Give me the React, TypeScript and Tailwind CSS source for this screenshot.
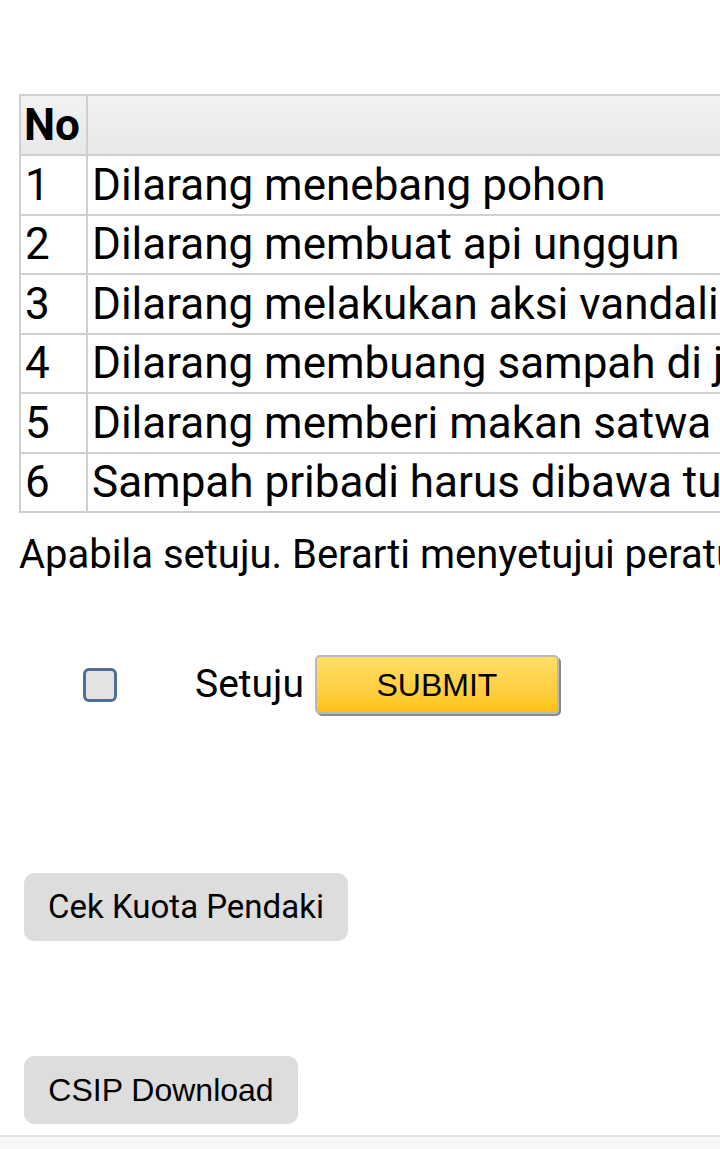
import React from "react";

const rows = [
  ["1", "Dilarang menebang pohon"],
  ["2", "Dilarang membuat api unggun"],
  ["3", "Dilarang melakukan aksi vandalisme"],
  ["4", "Dilarang membuang sampah di jalur pendakian"],
  ["5", "Dilarang memberi makan satwa liar"],
  ["6", "Sampah pribadi harus dibawa turun kembali"],
];

export default function App() {
  return (
    <div className="w-[720px] h-[1149px] overflow-hidden bg-white text-black" style={{ fontFamily: "Roboto, 'Noto Sans', sans-serif" }}>
      <div className="pt-[94px] pl-[19px]">
        <table className="border-collapse w-[1300px] text-[44px] leading-[56px]">
          <thead>
            <tr className="bg-gradient-to-b from-[#f2f2f2] to-[#e8e8e8]">
              <th className="border-2 border-[#cfcfcf] w-[67px] h-[60px] text-left pl-[3px] font-bold">No</th>
              <th className="border-2 border-[#cfcfcf]"></th>
            </tr>
          </thead>
          <tbody>
            {rows.map(([n, t]) => (
              <tr key={n}>
                <td className="border-2 border-[#cfcfcf] pl-[4px] h-[59.5px] whitespace-nowrap">{n}</td>
                <td className="border-2 border-[#cfcfcf] pl-[4px] whitespace-nowrap">{t}</td>
              </tr>
            ))}
          </tbody>
        </table>
        <p className="mt-[18px] text-[40px] leading-[48px] whitespace-nowrap">Apabila setuju. Berarti menyetujui peraturan yang berlaku</p>
      </div>
      <div className="mt-[76px] flex items-center">
        <div className="ml-[83px] w-[34px] h-[34px] rounded-[6px] border-[3px] border-[#4f6f94] bg-[#e3e3e3]" />
        <span className="ml-[78px] text-[39px]">Setuju</span>
        <button className="ml-[11px] w-[244px] h-[59px] rounded-[5px] bg-gradient-to-b from-[#ffe066] to-[#ffc20e] border-2 border-[#b8b8b8] shadow-[2px_2px_0_#8a8a8a] text-[32px] text-black" style={{ fontFamily: "'Liberation Sans', Arial, sans-serif" }}>SUBMIT</button>
      </div>
      <div className="mt-[159px] pl-[24px]">
        <button className="w-[324px] h-[68px] rounded-[10px] bg-[#dddddd] text-[33px] text-black">Cek Kuota Pendaki</button>
      </div>
      <div className="mt-[115px] pl-[24px]">
        <button className="w-[274px] h-[68px] rounded-[10px] bg-[#dddddd] text-[32px] text-black" style={{ fontFamily: "'Liberation Sans', Arial, sans-serif" }}>CSIP Download</button>
      </div>
      <div className="mt-[11px] border-t-2 border-[#e2e2e2] bg-[#f7f7f7] h-[40px]" />
    </div>
  );
}
